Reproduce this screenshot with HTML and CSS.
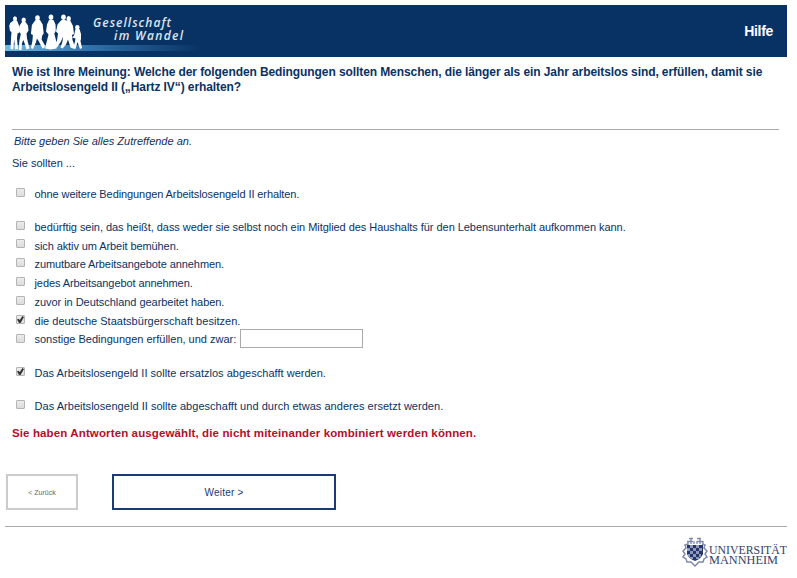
FILE: index.html
```
<!DOCTYPE html>
<html lang="de">
<head>
<meta charset="utf-8">
<title>Gesellschaft im Wandel</title>
<link rel="stylesheet" href="styles.css">
</head>
<body>
<header class="header">
  <svg class="logo" width="195" height="52" viewBox="0 0 195 52" role="img" aria-label="Gesellschaft im Wandel">
    <defs><linearGradient id="stripe"><stop offset="0" stop-color="#6fbbe8"/><stop offset=".45" stop-color="#2f6fa8"/><stop offset="1" stop-color="#093264"/></linearGradient></defs>
    <rect y="40" width="195" height="6" fill="url(#stripe)"/>
    <g fill="#fff">
      <ellipse cx="10" cy="13.700" rx="2" ry="2.500"/>
      <path d="M8.500 15.500h3.500l2 5 .5 7-2 1-.5 5 1 10.500-3 .5-.8-10-1 10-2.700-.5.500-11 .5-6-1.500-1-.8-5 1-3z"/>
      <ellipse cx="18.700" cy="15" rx="2.200" ry="2.500"/>
      <path d="M17 17h3.500l2.500 3.500.5 5-2 3 .5 5 2.500 10-3 1-3-9.500-1.500 3-.5 7h-2.700l.5-9 1.500-7-2-3 .5-5z"/>
      <ellipse cx="32.500" cy="13" rx="2.300" ry="2.700"/>
      <path d="M30.500 15 35 15l2.700 4.500 1 9-1.500 2-.6 4 3.300 6-.5 2.500-2 .5-3.500-7-2-3-1 4-3 6.500-2-1 1.500-7 .5-6-2-1 1-9z"/>
      <ellipse cx="46" cy="12.300" rx="2.300" ry="2.700"/>
      <path d="M44 15h4.500l2 4.500.3 6.500-1.500 2.500 2 8 .2 7-6 1-5.500-1 1.500-6 2-8-2.500-3 1-7z"/>
      <ellipse cx="58.500" cy="12.300" rx="2.300" ry="2.700"/>
      <ellipse cx="63.700" cy="13.700" rx="2.200" ry="2.600"/>
      <path d="M56.500 15h4l2 1h3l2.500 5 1 8-2 1 .5 5 2.500 7-2 1.500-2.500-1-2.500-8-2 5-3.500 4-2-1 2-6 .5-5-2 5-4 6-3-1 3-6 1-7-2-2 1.500-7z"/>
      <circle cx="72.300" cy="22.300" r="2.200"/>
      <path d="M70.500 24h4l1.500 5v5l-.5 2 1.500 7-2 1-2.500-7-2 7-2.500-.5 2-7 .5-3-3.500-1 2-2z"/>
    </g>
    <g class="logo-text">
      <text x="88" y="22" textLength="78">Gesellschaft</text>
      <text x="109" y="35" textLength="69">im Wandel</text>
    </g>
  </svg>
  <a class="help">Hilfe</a>
</header>
<main class="survey">
  <h1 class="question">Wie ist Ihre Meinung: Welche der folgenden Bedingungen sollten Menschen, die länger als ein Jahr arbeitslos sind, erfüllen, damit sie<br>Arbeitslosengeld II („Hartz IV“) erhalten?</h1>
  <p class="hint">Bitte geben Sie alles Zutreffende an.</p>
  <p class="intro">Sie sollten ...</p>
  <div class="options">
    <label class="option"><input type="checkbox"><span class="t1">ohne weitere Bedingungen Arbeitslosengeld II erhalten.</span></label>
    <label class="option spaced"><input type="checkbox"><span class="t2">bedürftig sein, das heißt, dass weder sie selbst noch ein Mitglied des Haushalts für den Lebensunterhalt aufkommen kann.</span></label>
    <label class="option tight"><input type="checkbox"><span class="t3">sich aktiv um Arbeit bemühen.</span></label>
    <label class="option"><input type="checkbox"><span class="t4">zumutbare Arbeitsangebote annehmen.</span></label>
    <label class="option"><input type="checkbox"><span class="t5">jedes Arbeitsangebot annehmen.</span></label>
    <label class="option"><input type="checkbox"><span class="t6">zuvor in Deutschland gearbeitet haben.</span></label>
    <label class="option before-other"><input type="checkbox" checked><span class="t7">die deutsche Staatsbürgerschaft besitzen.</span></label>
    <div class="option other"><input type="checkbox"><span class="t8">sonstige Bedingungen erfüllen, und zwar:</span><input class="field" type="text"></div>
    <label class="option spaced"><input type="checkbox" checked><span class="t9">Das Arbeitslosengeld II sollte ersatzlos abgeschafft werden.</span></label>
    <label class="option spaced"><input type="checkbox"><span class="t10">Das Arbeitslosengeld II sollte abgeschafft und durch etwas anderes ersetzt werden.</span></label>
  </div>
  <p class="error">Sie haben Antworten ausgewählt, die nicht miteinander kombiniert werden können.</p>
</main>
<nav class="actions">
  <button class="back">&lt; Zurück</button>
  <button class="next">Weiter &gt;</button>
</nav>
<footer class="footer">
  <svg width="106" height="32" viewBox="0 0 106 32" role="img" aria-label="Universität Mannheim">
    <g fill="none" stroke="#7f8aab" stroke-width="1.500">
      <path d="M7 7 4 8 5 11 2 14 4 17 2 20 5 22 6 25 10 25 14 29 18 25 22 25 23 22 26 20 24 17 26 14 23 11 24 8 21 7"/>
      <path d="M7 8V4M10 7V2M13 7V4M16 7V4M19 7V2M22 8V4M6 4.500h6M8 1.500h4M16 1.500h4M16 4.500h6" stroke-width="1.300"/>
    </g>
    <path d="M6 8H22V17Q20 22 14 24 8 22 6 17z" fill="#263668"/>
    <path d="M9 8h3v3H9zM15 8h3v3h-3zM6 11h3v3H6zM12 11h3v3h-3zM18 11h3v3h-3zM9 14h3v3H9zM15 14h3v3h-3zM7 17h2v3H7zM12 17h3v3h-3zM18 17h2v3h-2zM9 20h3v2H9zM15 20h3v2h-3z" fill="#8f99ba"/>
    <g class="uni-text">
      <text x="28" y="17" textLength="78" lengthAdjust="spacingAndGlyphs">UNIVERSITÄT</text>
      <text x="28" y="27" textLength="69" lengthAdjust="spacingAndGlyphs">MANNHEIM</text>
    </g>
  </svg>
</footer>
</body>
</html>
```

FILE: styles.css
```
* { box-sizing: border-box; }
body {
  margin: 0;
  padding: 5px 10px 0 5px;
  background: #fff;
  color: #093264;
  font: 11px/15px "Liberation Sans", Arial, sans-serif;
}
.header {
  display: flex;
  justify-content: space-between;
  align-items: center;
  height: 52px;
  padding-right: 14px;
  background: #093264;
}
.logo { display: block; }
.logo-text { fill: #dde5ef; font: italic 600 12px "Open Sans", "Noto Sans", sans-serif; }
.help { color: #fff; font-size: 14px; font-weight: bold; letter-spacing: -.3px; }
.survey { padding: 8px 8px 0 7px; }
.question {
  height: 65px;
  margin: 0;
  border-bottom: 1px solid #aaa;
  font-size: 12px;
  line-height: 15px;
  letter-spacing: -.087px;
  white-space: nowrap;
}
.hint { margin: 4px 0 0 2px; font-style: italic; }
.intro { margin: 7px 0 0; }
.options { margin-top: 14px; }
.option {
  display: flex;
  align-items: flex-start;
  height: 19px;
  padding-top: 2px;
  white-space: nowrap;
}
.option.spaced { height: 33px; padding-top: 16px; }
.option.tight, .option.before-other { height: 18px; }
.option.other { width: 351px; height: 20px; }
.option input[type="checkbox"] {
  appearance: none;
  flex: none;
  width: 9px;
  height: 9px;
  margin: 1px 9.500px 0 4px;
  border: 1px solid #b4b4b4;
  border-radius: 1px;
  background: linear-gradient(#ececec, #dcdcdc);
}
.option.tight input[type="checkbox"] { margin-top: 0; }
.option.other input[type="checkbox"] { margin-top: 2px; }
.option input[type="checkbox"]:checked::after {
  content: "";
  display: block;
  width: 7px;
  height: 7px;
  background: #333;
  clip-path: polygon(0 50%, 20% 38%, 40% 58%, 78% 0, 100% 14%, 50% 100%, 30% 100%);
}
.t1, .t3, .t4, .t5 { letter-spacing: -.09px; }
.t2 { letter-spacing: -.047px; }
.t6 { letter-spacing: -.04px; }
.t7 { letter-spacing: .025px; }
.t9 { letter-spacing: .02px; }
.t10 { letter-spacing: .036px; }
.option .field {
  width: 123px;
  height: 19px;
  margin: -3px 0 0 auto;
  border: 1px solid #aaa;
  background: #fff;
}
.error {
  margin: 10px 0 0;
  color: #b70d2b;
  font-size: 11.5px;
  font-weight: bold;
  letter-spacing: .124px;
  white-space: nowrap;
}
.actions { display: flex; gap: 34px; padding: 33px 0 0 1px; }
.actions button {
  height: 36px;
  padding: 0;
  background: #fff;
  font-family: inherit;
}
.actions .back { width: 72px; border: 2px solid #ccc; color: #666; font-size: 7px; }
.actions .next { width: 224px; border: 2px solid #193a78; color: #193a78; font-size: 10px; letter-spacing: .2px; }
.footer {
  display: flex;
  justify-content: flex-end;
  margin-top: 16px;
  padding-top: 10px;
  border-top: 1px solid #aaa;
}
.uni-text { fill: #34426f; font: 11.5px "Liberation Serif", serif; }
```
